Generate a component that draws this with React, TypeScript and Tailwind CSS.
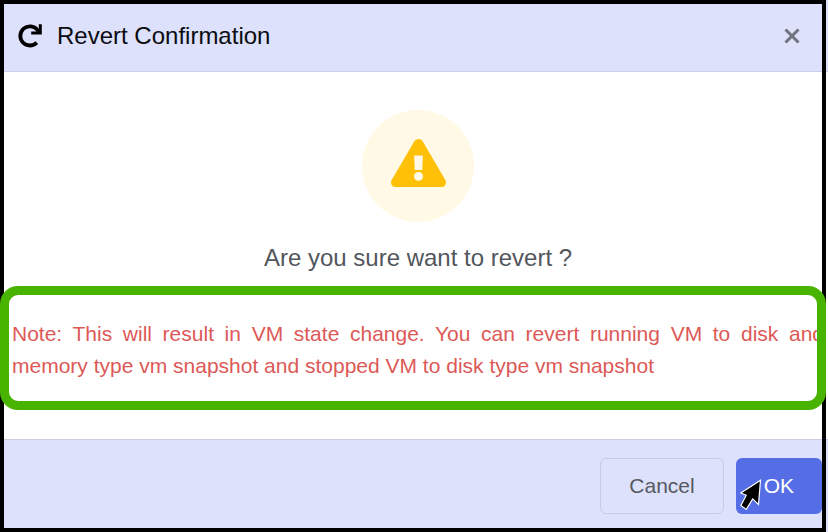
import React from "react";

function RedoIcon() {
  return (
    <svg width="26" height="26" viewBox="0 0 26 26" fill="none" stroke="#000" strokeWidth="3.8" aria-hidden="true">
      <path d="M20.8 19.6A9.6 9.6 0 1 1 21.4 6.9L23 9" />
      <path d="M24.3 1.2V10.1H15.2" strokeWidth="3" />
    </svg>
  );
}

function WarningIcon() {
  return (
    <svg width="56" height="50" viewBox="0 0 56 50" aria-hidden="true">
      <path
        d="M24.5 2.1C26.2 -.7 30.8 -.7 32.5 2.1L55.3 41C57.1 44.1 55.2 48 51.5 48H5.5C1.8 48 -.1 44.1 1.7 41Z"
        fill="#ffc107"
      />
      <path d="M24.1 16.5H32.9L32.2 31H24.8Z" fill="#fff9e6" />
      <circle cx="28.5" cy="37.4" r="4.5" fill="#fff9e6" />
    </svg>
  );
}

function Pointer() {
  return (
    <svg className="absolute top-5 left-1" width="24" height="34" viewBox="0 0 24 34" aria-hidden="true">
      <path d="M20.5 2.2L.8 15L6.2 17.2L.9 27.6L6.3 31.4L12.7 20.9L18.5 26.4Z" fill="#000" stroke="#fff" strokeWidth="1.2" />
    </svg>
  );
}

export default function App() {
  return (
    <div className="relative min-h-screen overflow-hidden bg-white font-['Liberation_Sans',Arial,sans-serif]">
      <section role="dialog" aria-labelledby="dialog-title" className="flex min-h-screen flex-col">
        <header className="flex h-18 items-center border-b border-[#c9cfe6] bg-[#dde1fb] pr-6 pl-4">
          <RedoIcon />
          <h1 id="dialog-title" className="ml-[15px] grow text-2xl text-[#0b0c10]">
            Revert Confirmation
          </h1>
          <button type="button" aria-label="Close" className="flex size-6 items-center justify-center">
            <svg width="16" height="16" viewBox="0 0 16 16" stroke="#70727c" strokeWidth="3" aria-hidden="true">
              <path d="M1.5 1.5L14.5 14.5M14.5 1.5L1.5 14.5" />
            </svg>
          </button>
        </header>

        <div className="flex grow flex-col items-center pt-[38px]">
          <div className="ml-2 flex size-28 items-center justify-center rounded-full bg-[#fff9e6] pb-1">
            <WarningIcon />
          </div>
          <p className="mt-5 ml-2 text-2xl text-[#53565c]">Are you sure want to revert ?</p>
          <div className="relative mt-3 w-full pr-1">
            <p className="pt-8 pb-7 pl-3 text-justify text-[21px] leading-8 text-[#dc5957]">
              Note: This will result in VM state change. You can revert running VM to disk and memory type vm snapshot
              and stopped VM to disk type vm snapshot
            </p>
            <div className="absolute inset-y-0 right-0.5 left-0 z-10 rounded-[18px] border-9 border-[#49b400]" />
          </div>
        </div>

        <footer className="flex h-[93px] items-start justify-end gap-3 border-t border-[#c9cfdf] bg-[#dde1fb] pt-[18px] pr-1.5">
          <button type="button" className="h-14 rounded-md border border-[#c8cce2] px-7 text-[21px] text-[#56595f]">
            Cancel
          </button>
          <button type="button" className="relative h-14 rounded-md bg-[#556ee6] px-7 text-[21px] text-white">
            OK
            <Pointer />
          </button>
        </footer>
      </section>
      <div className="pointer-events-none absolute inset-y-0 right-0.5 left-0 border-4 border-black" />
    </div>
  );
}
